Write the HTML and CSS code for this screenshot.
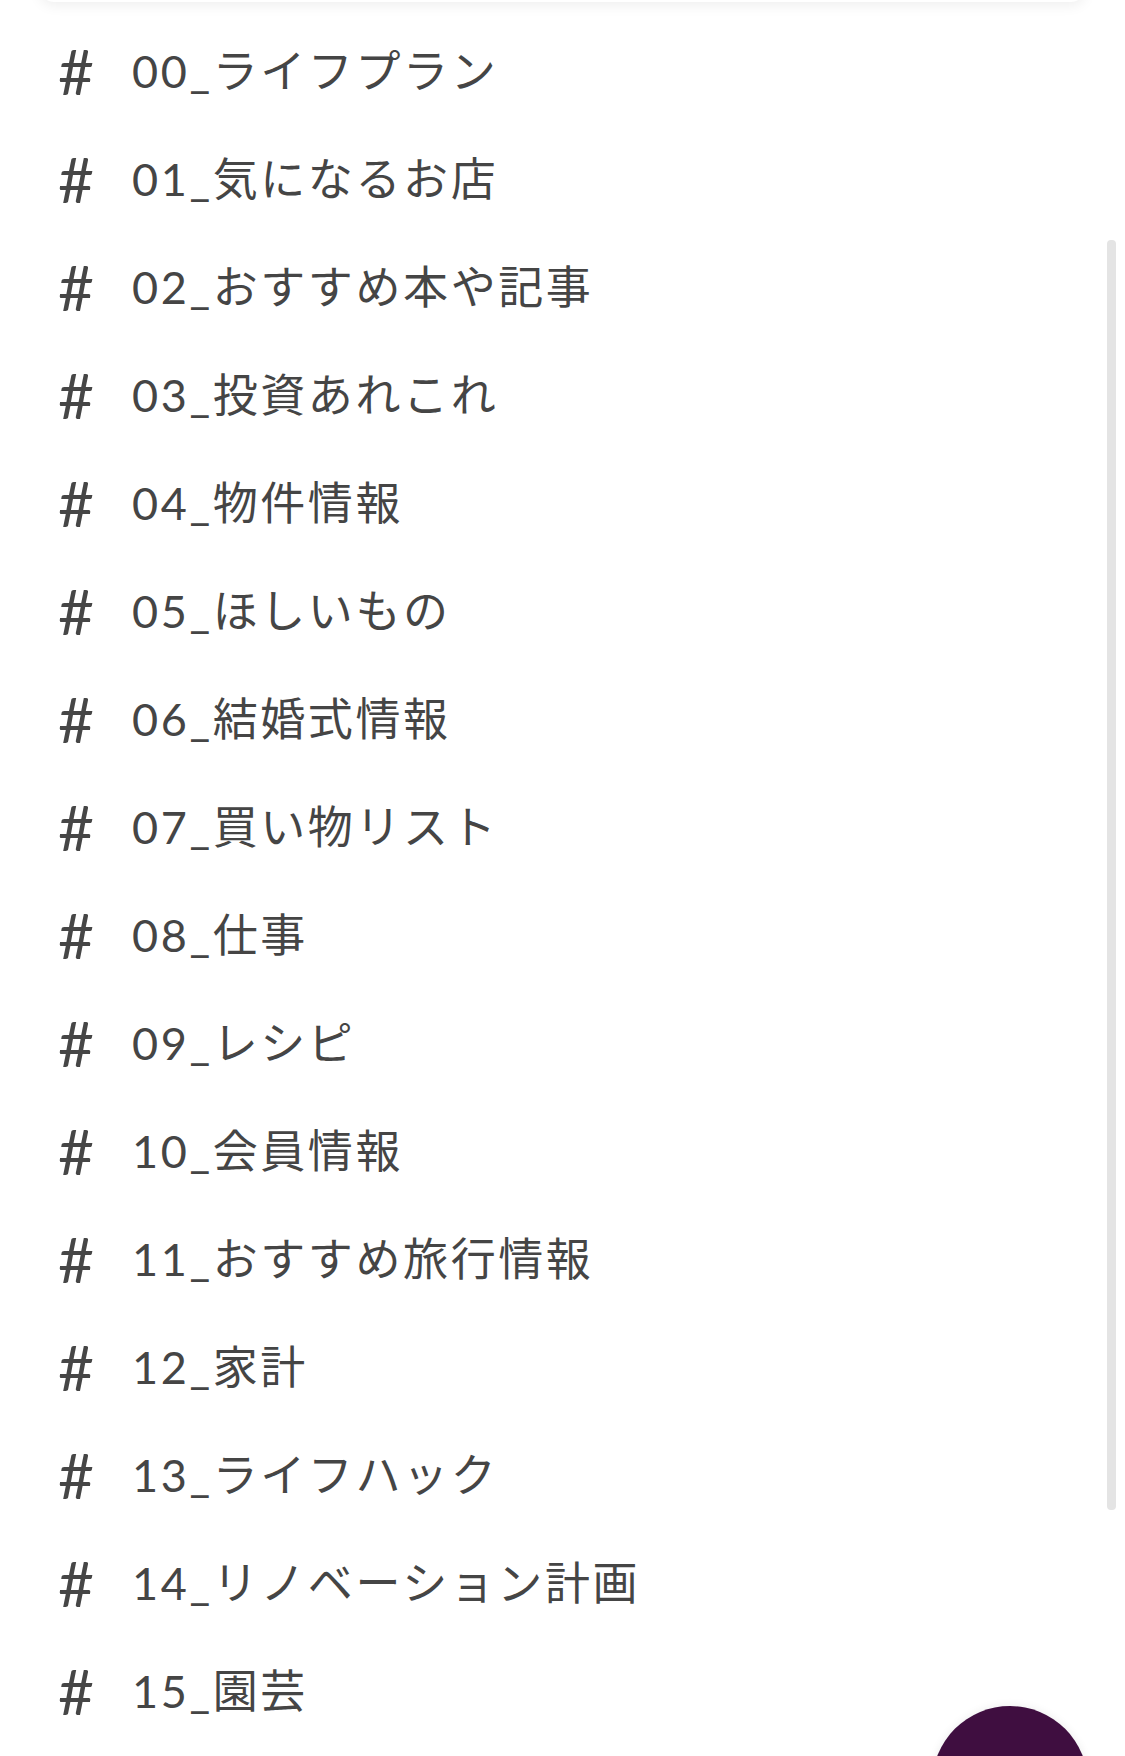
FILE: index.html
```html
<!DOCTYPE html>
<html lang="ja">
<head>
<meta charset="utf-8">
<link rel="stylesheet" href="styles.css">
</head>
<body>
<div class="header"></div>
<ul class="channels">
  <li class="row"><span class="hash">#</span><span class="name">00_ライフプラン</span></li>
  <li class="row"><span class="hash">#</span><span class="name">01_気になるお店</span></li>
  <li class="row"><span class="hash">#</span><span class="name">02_おすすめ本や記事</span></li>
  <li class="row"><span class="hash">#</span><span class="name">03_投資あれこれ</span></li>
  <li class="row"><span class="hash">#</span><span class="name">04_物件情報</span></li>
  <li class="row"><span class="hash">#</span><span class="name">05_ほしいもの</span></li>
  <li class="row"><span class="hash">#</span><span class="name">06_結婚式情報</span></li>
  <li class="row"><span class="hash">#</span><span class="name">07_買い物リスト</span></li>
  <li class="row"><span class="hash">#</span><span class="name">08_仕事</span></li>
  <li class="row"><span class="hash">#</span><span class="name">09_レシピ</span></li>
  <li class="row"><span class="hash">#</span><span class="name">10_会員情報</span></li>
  <li class="row"><span class="hash">#</span><span class="name">11_おすすめ旅行情報</span></li>
  <li class="row"><span class="hash">#</span><span class="name">12_家計</span></li>
  <li class="row"><span class="hash">#</span><span class="name">13_ライフハック</span></li>
  <li class="row"><span class="hash">#</span><span class="name">14_リノベーション計画</span></li>
  <li class="row"><span class="hash">#</span><span class="name">15_園芸</span></li>
</ul>
<div class="scrollbar"></div>
<div class="fab">
  <svg class="fab-icon" width="40" height="40" viewBox="0 0 24 24" aria-hidden="true">
    <path d="M4 20 L4 16 L15 5 L19 9 L8 20 Z" fill="none" stroke="#ffffff" stroke-width="2" stroke-linejoin="round"/>
  </svg>
</div>
</body>
</html>
```
FILE: styles.css
```css
html, body {
  margin: 0;
  padding: 0;
  background: #ffffff;
  width: 1125px;
  height: 1756px;
  overflow: hidden;
}
body {
  position: relative;
  font-family: Lato, "Noto Sans CJK JP", sans-serif;
  color: #454545;
}
.header {
  position: absolute;
  left: 40px;
  right: 40px;
  top: -60px;
  height: 62px;
  background: #ffffff;
  border-radius: 14px;
  box-shadow: 0 3px 14px rgba(0, 0, 0, 0.07);
}
.channels {
  list-style: none;
  margin: 0;
  padding: 17px 0 0 0;
}
.row {
  height: 108px;
  display: flex;
  align-items: center;
  padding-left: 58px;
}
.hash {
  width: 74px;
  font-family: Lato, sans-serif;
  font-weight: 400;
  font-size: 62px;
  line-height: 1;
  color: #464646;
}
.name {
  font-size: 45px;
  font-weight: 400;
  letter-spacing: 2.6px;
  line-height: 1;
}
.scrollbar {
  position: absolute;
  left: 1107px;
  top: 240px;
  width: 9px;
  height: 1270px;
  background: #e4e4e4;
  border-radius: 4px;
}
.fab {
  position: absolute;
  left: 932px;
  top: 1706px;
  width: 156px;
  height: 156px;
  border-radius: 50%;
  background: #3f0e40;
  box-shadow: 0 0 10px rgba(0, 0, 0, 0.08);
  display: flex;
  justify-content: center;
  padding-top: 44px;
  box-sizing: border-box;
}
.fab-icon {
  display: block;
}
```
